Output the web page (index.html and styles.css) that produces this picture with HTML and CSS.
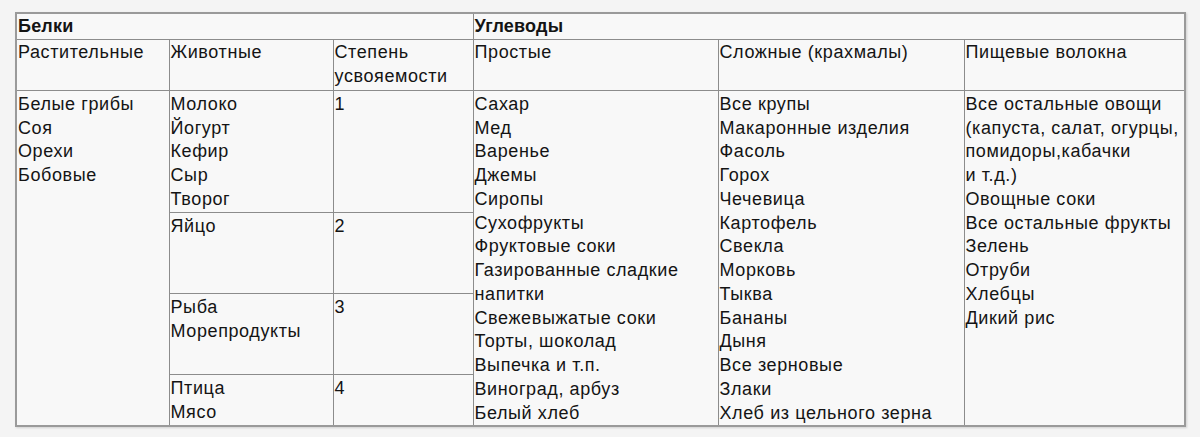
FILE: index.html
```html
<!DOCTYPE html>
<html lang="ru">
<head>
<meta charset="utf-8">
<title>Белки и углеводы</title>
<link rel="stylesheet" href="styles.css">
</head>
<body>
<table class="grid">
  <colgroup>
    <col class="c1"><col class="c2"><col class="c3"><col class="c4"><col class="c5"><col class="c6">
  </colgroup>
  <tr class="r-title">
    <td colspan="3" class="title">Белки</td>
    <td colspan="3" class="title">Углеводы</td>
  </tr>
  <tr class="r-head">
    <td>Растительные</td>
    <td>Животные</td>
    <td>Степень<br>усвояемости</td>
    <td>Простые</td>
    <td>Сложные (крахмалы)</td>
    <td>Пищевые волокна</td>
  </tr>
  <tr class="r-a">
    <td rowspan="4" class="data">Белые грибы<br>Соя<br>Орехи<br>Бобовые</td>
    <td class="data">Молоко<br>Йогурт<br>Кефир<br>Сыр<br>Творог</td>
    <td class="data">1</td>
    <td rowspan="4" class="data">Сахар<br>Мед<br>Варенье<br>Джемы<br>Сиропы<br>Сухофрукты<br>Фруктовые соки<br>Газированные сладкие<br>напитки<br>Свежевыжатые соки<br>Торты, шоколад<br>Выпечка и т.п.<br>Виноград, арбуз<br>Белый хлеб</td>
    <td rowspan="4" class="data">Все крупы<br>Макаронные изделия<br>Фасоль<br>Горох<br>Чечевица<br>Картофель<br>Свекла<br>Морковь<br>Тыква<br>Бананы<br>Дыня<br>Все зерновые<br>Злаки<br>Хлеб из цельного зерна</td>
    <td rowspan="4" class="data">Все остальные овощи<br>(капуста, салат, огурцы,<br>помидоры,кабачки<br>и т.д.)<br>Овощные соки<br>Все остальные фрукты<br>Зелень<br>Отруби<br>Хлебцы<br>Дикий рис</td>
  </tr>
  <tr class="r-b">
    <td class="data">Яйцо</td>
    <td class="data">2</td>
  </tr>
  <tr class="r-c">
    <td class="data">Рыба<br>Морепродукты</td>
    <td class="data">3</td>
  </tr>
  <tr class="r-d">
    <td class="data">Птица<br>Мясо</td>
    <td class="data">4</td>
  </tr>
</table>
</body>
</html>
```

FILE: styles.css
```css
html, body {
  margin: 0;
  padding: 0;
  background: #f4f4f4;
}

body {
  padding: 12px 15px;
  font-family: "Liberation Sans", Arial, sans-serif;
  font-size: 18px;
  line-height: 23.77px;
  color: #141414;
}

.grid {
  border-collapse: collapse;
  table-layout: fixed;
  width: 1169px;
  background: #f8f8f8;
  border: 2px solid #9a9a9a;
  box-shadow: 1px 1px 2px rgba(0, 0, 0, 0.15);
}

.c1 { width: 153px; }
.c2 { width: 164px; }
.c3 { width: 140px; }
.c4 { width: 245px; }
.c5 { width: 246px; }
.c6 { width: 221px; }

.grid td {
  border: 1px solid #8c8c8c;
  padding: 1px 1px 0 1px;
  vertical-align: top;
  text-align: left;
  letter-spacing: 0.6px;
  white-space: nowrap;
}

.grid td.title {
  font-weight: bold;
  letter-spacing: 0.2px;
}

.r-title { height: 26px; }
.r-head { height: 51px; }
.r-a { height: 122px; }
.r-b { height: 81px; }
.r-c { height: 80px; }
.r-d { height: 52px; }

.grid td.data {
  padding-top: 2px;
}
```
